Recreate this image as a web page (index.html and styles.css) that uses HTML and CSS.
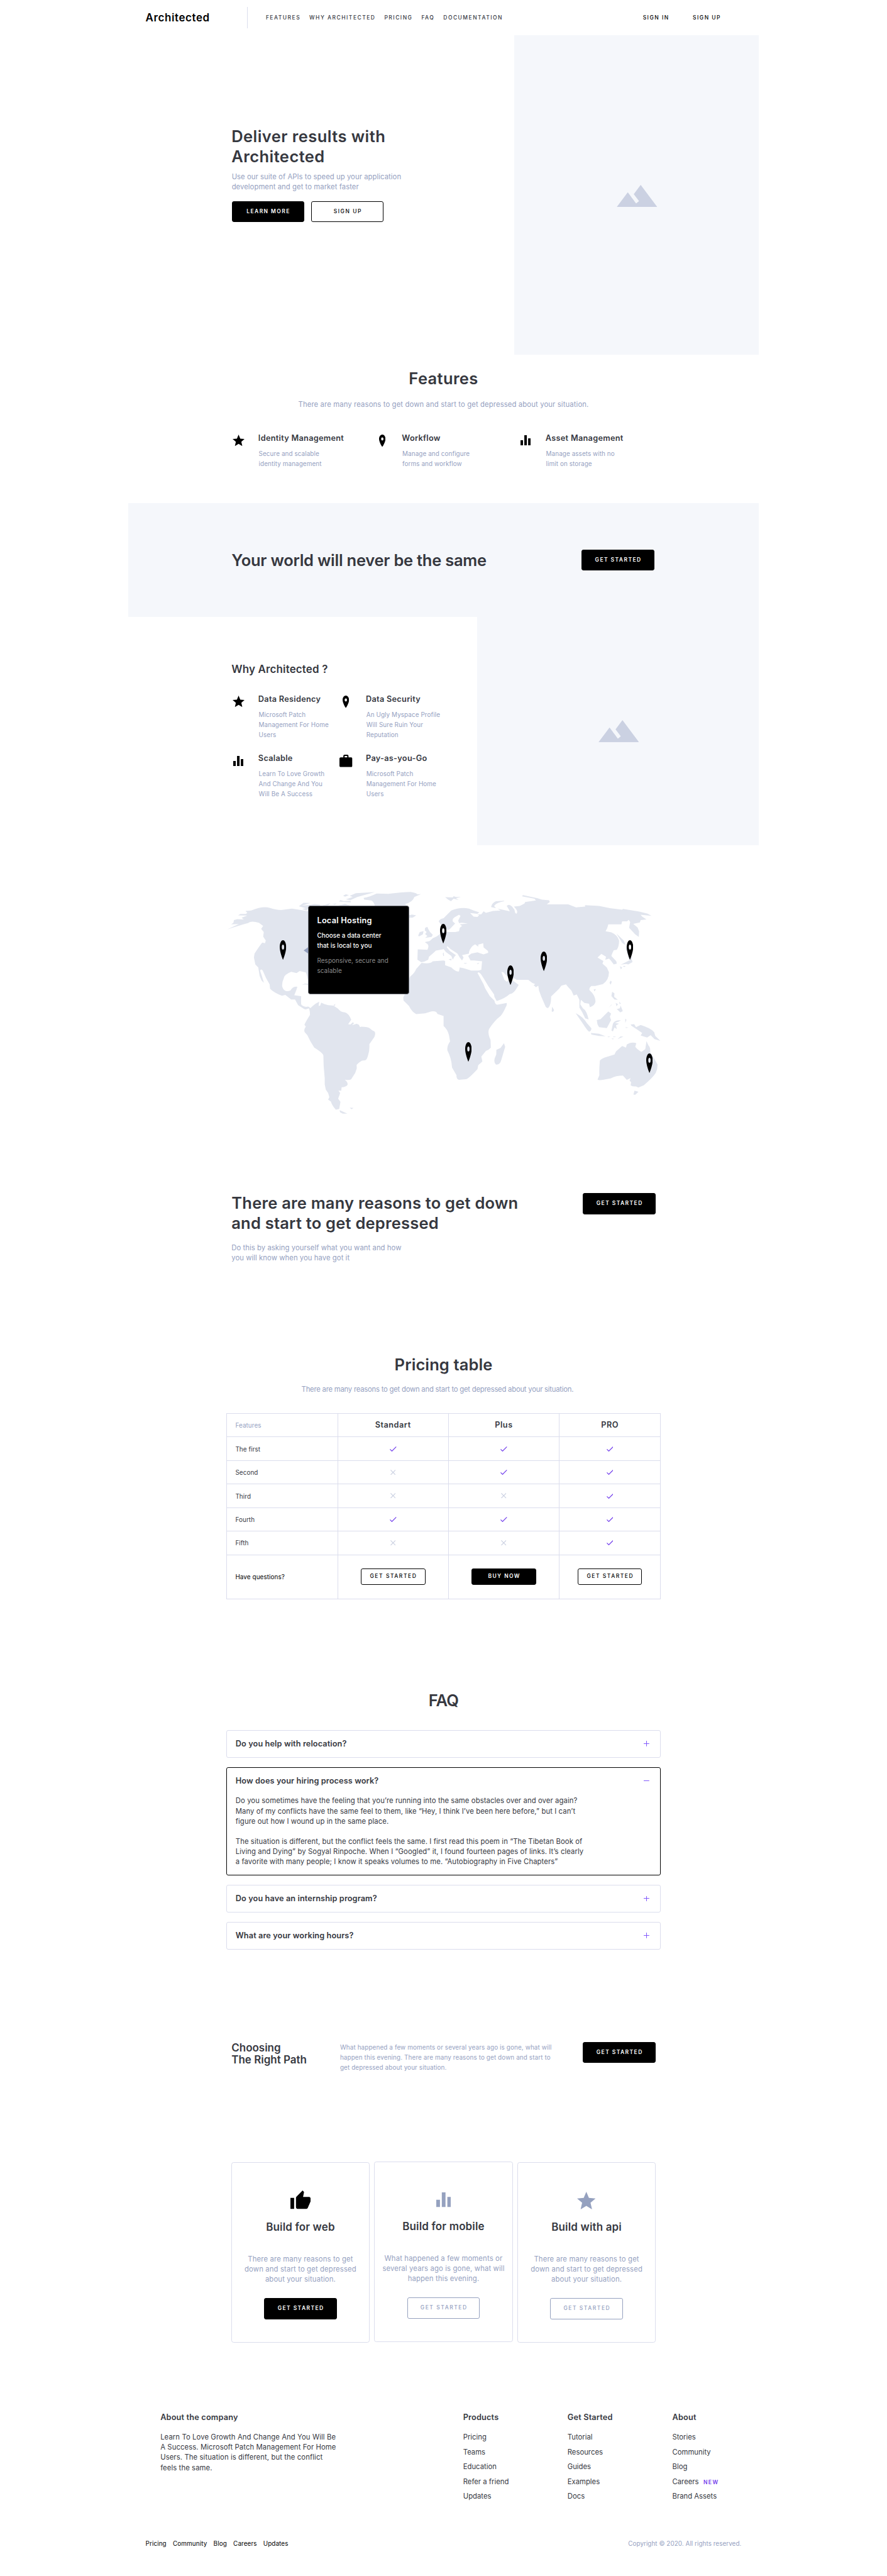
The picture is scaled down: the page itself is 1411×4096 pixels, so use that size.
FILE: index.html
```html
<!DOCTYPE html>
<html lang="en">
<head>
<meta charset="utf-8">
<title>Architected</title>
<link rel="stylesheet" href="styles.css">
</head>
<body>
<svg class="sprite" aria-hidden="true">
  <symbol id="star" viewBox="2 2 20 19" preserveAspectRatio="none"><path d="M12 17.27L18.18 21l-1.64-7.03L22 9.24l-7.19-.61L12 2 9.19 8.63 2 9.24l5.46 4.73L5.82 21z"/></symbol>
  <symbol id="pin" viewBox="5 2 14 20" preserveAspectRatio="none"><path d="M12 2C8.13 2 5 5.13 5 9c0 5.25 7 13 7 13s7-7.75 7-13c0-3.87-3.13-7-7-7zm0 9.5a2.5 2.5 0 0 1 0-5 2.5 2.5 0 0 1 0 5z"/></symbol>
  <symbol id="bars" viewBox="4 4 16 16" preserveAspectRatio="none"><path d="M10 20h4V4h-4v16zm-6 0h4v-8H4v8zM16 9v11h4V9h-4z"/></symbol>
  <symbol id="work" viewBox="2 2 20 19" preserveAspectRatio="none"><path d="M20 6h-4V4c0-1.11-.89-2-2-2h-4c-1.11 0-2 .89-2 2v2H4c-1.11 0-1.99.89-1.99 2L2 19c0 1.11.89 2 2 2h16c1.11 0 2-.89 2-2V8c0-1.11-.89-2-2-2zm-6 0h-4V4h4v2z"/></symbol>
  <symbol id="thumb" viewBox="1 1 22 20"><path d="M1 21h4V9H1v12zm22-11c0-1.1-.9-2-2-2h-6.31l.95-4.57.03-.32c0-.41-.17-.79-.44-1.06L14.17 1 7.59 7.59C7.22 7.95 7 8.45 7 9v10c0 1.1.9 2 2 2h9c.83 0 1.54-.5 1.84-1.22l3.02-7.05c.09-.23.14-.47.14-.73v-2z"/></symbol>
  <symbol id="peaks" viewBox="1 6 22 12"><path d="M14 6l-3.75 5 2.85 3.8-1.6 1.2C9.81 13.75 7 10 7 10l-6 8h22L14 6z"/></symbol>
  <symbol id="check" viewBox="3.4 5.6 17.6 13.4"><path d="M9 16.17L4.83 12l-1.42 1.41L9 19 21 7l-1.41-1.41z"/></symbol>
  <symbol id="cross" viewBox="5 5 14 14"><path d="M19 6.41L17.59 5 12 10.59 6.41 5 5 6.41 10.59 12 5 17.59 6.41 19 12 13.41 17.59 19 19 17.59 13.41 12z"/></symbol>
</svg>

<div class="page">
  <header class="header">
    <div class="logo">Architected</div>
    <nav class="nav"><a>FEATURES</a><a>WHY ARCHITECTED</a><a>PRICING</a><a>FAQ</a><a>DOCUMENTATION</a></nav>
    <nav class="account"><a>SIGN IN</a><a>SIGN UP</a></nav>
  </header>

  <section class="hero">
    <div class="hero-copy">
      <h1 class="title title-hero">Deliver results with<br>Architected</h1>
      <p class="lead">Use our suite of APIs to speed up your application<br>development and get to market faster</p>
      <div class="actions"><a class="btn btn-dark">LEARN MORE</a><a class="btn btn-line">SIGN UP</a></div>
    </div>
    <div class="placeholder placeholder-hero"><svg class="i-peaks"><use href="#peaks"/></svg></div>
  </section>

  <section class="features">
    <h2 class="title title-features">Features</h2>
    <p class="features-sub">There are many reasons to get down and start to get depressed about your situation.</p>
    <div class="feature-grid">
      <div class="item"><span class="item-icon"><svg class="i-star"><use href="#star"/></svg></span><div><h3>Identity Management</h3><p>Secure and scalable<br>identity management</p></div></div>
      <div class="item"><span class="item-icon"><svg class="i-pin"><use href="#pin"/></svg></span><div><h3>Workflow</h3><p>Manage and configure<br>forms and workflow</p></div></div>
      <div class="item"><span class="item-icon"><svg class="i-bars"><use href="#bars"/></svg></span><div><h3>Asset Management</h3><p>Manage assets with no<br>limit on storage</p></div></div>
    </div>
  </section>

  <section class="band">
    <h2 class="title title-band">Your world will never be the same</h2>
    <a class="btn btn-dark">GET STARTED</a>
  </section>

  <section class="why">
    <div class="why-copy">
      <h2>Why Architected ?</h2>
      <div class="why-grid">
        <div class="item"><span class="item-icon"><svg class="i-star"><use href="#star"/></svg></span><div><h3>Data Residency</h3><p>Microsoft Patch<br>Management For Home<br>Users</p></div></div>
        <div class="item"><span class="item-icon"><svg class="i-pin"><use href="#pin"/></svg></span><div><h3>Data Security</h3><p>An Ugly Myspace Profile<br>Will Sure Ruin Your<br>Reputation</p></div></div>
        <div class="item"><span class="item-icon"><svg class="i-bars"><use href="#bars"/></svg></span><div><h3>Scalable</h3><p>Learn To Love Growth<br>And Change And You<br>Will Be A Success</p></div></div>
        <div class="item"><span class="item-icon"><svg class="i-work"><use href="#work"/></svg></span><div><h3>Pay-as-you-Go</h3><p>Microsoft Patch<br>Management For Home<br>Users</p></div></div>
      </div>
    </div>
    <div class="placeholder placeholder-why"><svg class="i-peaks"><use href="#peaks"/></svg></div>
  </section>

  <section class="map">
    <svg class="world" viewBox="0 0 2880 1500" aria-hidden="true">
      <!-- North America and the Arctic islands -->
      <path d="M35 273L110 238 60 240 75 230 78 212 100 206 142 208 128 197 165 183 105 182 120 173 155 173 165 165 153 153 190 150Q265 120 310 133 350 147 385 147L455 138 520 148 560 155 640 160 700 300 640 400 570 520 559 600Q550 560 545 552L505 543 485 556 450 548Q405 565 402 590 388 620 392 645 405 685 445 670 462 640 490 645 485 665 470 700L515 706Q513 740 515 760 530 780 560 774L575 784 565 785 545 792 535 790 495 765 475 728 450 728 412 698 390 703Q340 685 313 658L310 630Q285 590 265 540 255 525 248 540L258 570 273 620 258 605 245 575 236 520 217 500 208 455 212 430Q240 385 262 358L280 362 285 345 268 320 272 290 255 270 268 250 240 230Q190 215 170 232 120 245 35 273Z"/>
      <path d="M993 31L880 62 835 83 805 78 850 62 830 55 870 38ZM787 54L805 45 825 50 800 60ZM760 92L770 83 790 90 835 88 838 97ZM500 122L530 100 575 101 520 118 580 112 600 108 640 112 632 124 560 124 558 140 550 150 520 140 545 136ZM650 118L705 103 690 116ZM712 110L745 104 735 112ZM740 122L800 107 845 122Z"/>
      <path d="M920 68Q960 62 1005 40L1080 42Q1180 30 1225 30 1260 35 1270 45L1293 44 1250 62Q1240 95 1190 108L1215 130 995 130Q990 95 970 85L925 80ZM1215 180L1235 177 1262 182 1240 196 1215 198ZM518 634L540 625 570 628 570 634 540 630ZM725 765l12-8-3 12Z"/>
      <!-- South America -->
      <path d="M560 774L575 784 590 770Q605 755 632 742L628 770 638 768 645 748 665 757 690 765 725 768 755 788Q770 810 800 812 825 820 840 860L820 888 835 890 850 876 858 882 845 895 875 885 890 892 897 908 905 904Q950 905 960 915 975 930 992 936 1000 950 990 972L958 1018Q960 1060 950 1088 942 1120 930 1123L910 1125Q885 1140 875 1153L876 1175 866 1205 840 1245Q830 1255 798 1248 820 1265 816 1282 808 1295 778 1298L775 1320 757 1320 768 1335 755 1372 770 1392 762 1438 740 1443Q715 1415 708 1390L690 1378 698 1362 690 1335 675 1313 668 1280 668 1240 661 1160 659 1090Q650 1070 600 1040 575 1005 555 960L538 940Q530 925 545 903L536 892Q540 880 572 828 572 800 565 785ZM765 1447L815 1469 785 1469 767 1460ZM830 1430L855 1432 842 1440Z"/>
      <!-- Europe and Asia -->
      <path d="M1275 312L1285 290 1310 284 1305 305 1280 318ZM1320 262L1335 256 1340 270 1352 290 1370 308 1362 322 1320 328 1335 315 1320 303 1330 290 1318 280Z"/>
      <path d="M1270 470L1272 402 1335 405Q1348 380 1335 368L1318 355 1350 348 1370 330 1395 318 1420 300 1440 285 1475 290 1515 290 1540 285 1545 262 1560 250 1545 240 1597 235 1560 230 1540 232 1535 215 1550 185 1540 178 1510 195Q1495 205 1500 222L1515 235 1495 255 1480 272 1465 278 1450 250 1425 245 1408 220Q1415 205 1440 200L1460 180 1490 150Q1550 125 1605 138L1635 150 1672 162 1660 172 1612 166 1635 190 1660 192 1672 180 1655 176 1685 175 1700 155 1715 165 1760 153 1810 150 1790 138 1870 155 1865 145 1850 120Q1865 105 1885 125L1900 145 1905 165 1912 172Q1925 160 1910 140L1897 125 1935 120 1965 105 1970 95 2040 85 2030 74 1950 58 1955 50 2050 70 2080 80 2125 84 2130 95 2110 110 2170 110 2250 110 2300 130 2360 125 2358 115 2450 120 2520 135 2600 145 2605 140 2700 155 2765 170 2790 185 2720 178 2730 190 2758 208 2720 212 2715 228 2672 237 2700 260 2710 285 2708 322 2685 305 2645 262 2652 225 2642 210 2632 220 2600 220 2595 240 2510 240Q2505 265 2492 285L2530 292Q2570 310 2580 345 2580 385 2565 405L2545 408 2535 430 2530 445 2562 480 2565 495 2545 500 2530 480 2515 462 2490 470 2495 450 2465 432 2440 455 2460 468 2478 478 2472 495 2500 520 2514 550Q2515 600 2475 628L2425 640 2400 640Q2380 655 2390 670 2425 700 2427 740 2425 765 2390 778L2385 755 2355 750 2332 730 2328 760 2345 785Q2370 800 2382 858L2360 850 2340 810 2322 780 2322 730 2305 695 2285 702 2270 670Q2250 650 2235 630L2205 638 2190 658 2138 708Q2140 760 2120 782 2110 785 2103 775L2075 710 2060 670 2055 638 2040 648 2025 635 2035 628 2015 620 1990 600 1915 600 1900 590 1890 605 1928 633 1905 670Q1885 695 1870 692 1840 720 1785 738L1770 710 1768 695 1730 640 1700 590 1682 562 1665 548 1685 535 1690 480 1640 475 1615 475 1605 455 1600 445 1620 430 1660 422 1700 435 1730 425 1728 412 1700 390 1697 362 1665 372 1665 385 1645 370Q1615 385 1605 420L1605 430 1560 440 1570 455 1560 475 1545 455 1530 430 1485 400 1465 382 1460 388 1480 412 1520 440 1510 450 1500 470 1490 445 1455 420 1440 400 1435 402 1390 410 1375 425 1345 450 1340 470 1315 482 1295 486Z"/>
      <path d="M1833 87L1780 90Q1755 100 1748 128L1780 135 1768 120Q1785 98 1833 90ZM1450 63L1500 65 1505 57 1520 62 1552 62 1520 70 1538 82 1505 73 1488 90 1470 80ZM1472 468L1492 462 1490 475ZM1435 430l5-8 3 22-5 2ZM1570 490l25 2-15 4ZM1655 494l18-4-10 8Z"/>
      <path class="sea" d="M1815 548L1830 552 1845 570 1862 582 1880 597 1895 590 1905 600 1890 610 1865 602 1850 612 1835 600 1828 582Z"/>
      <!-- Africa and Madagascar -->
      <path d="M1297 490Q1350 500 1370 480L1440 475 1450 478 1450 505 1490 520Q1520 550 1540 545L1545 520 1570 525 1620 540 1665 540 1685 535 1675 548 1660 555 1700 630 1710 655 1740 705 1770 735Q1775 762 1790 762L1850 750Q1852 765 1845 775 1825 820 1810 835 1770 865 1735 920 1725 950 1745 990L1747 1040Q1735 1055 1715 1062L1685 1098 1692 1130 1665 1155 1660 1180Q1600 1245 1585 1245L1540 1250Q1522 1245 1524 1220L1495 1170Q1490 1105 1465 1060 1460 1030 1482 1000L1475 960Q1465 920 1440 900L1440 835 1400 822Q1395 800 1360 805L1320 818 1262 823Q1235 810 1215 770L1180 735 1178 715 1190 690 1221 580Q1250 560 1262 530ZM1832 1012L1840 1035 1815 1120Q1805 1155 1780 1150 1765 1140 1772 1110L1782 1085 1783 1055 1810 1042Z"/>
      <!-- Islands of Asia -->
      <path d="M2145 775L2158 797 2150 808 2142 805ZM2298 817Q2345 840 2370 880L2400 915Q2400 935 2385 937 2370 925 2345 885ZM2397 945L2450 950 2492 967 2450 965 2400 955ZM2505 968l20 2-15 3ZM2532 980l18 4-14 2ZM2540 968l22 2-16 3ZM2570 985L2608 969 2590 968ZM2435 862L2460 855 2510 805 2528 820 2520 840 2528 862 2510 895 2500 914 2450 908 2440 890ZM2540 885Q2550 862 2592 863L2575 873 2552 880 2580 885 2560 895 2565 920 2550 910 2540 935 2530 930ZM2535 678L2550 688 2548 710 2572 730 2550 728 2530 705ZM2558 750l15 8-10 14ZM2580 742l12 12-8 3ZM2532 758L2512 782 2530 765ZM2565 790L2585 785 2590 768 2604 803 2588 812ZM2525 605L2532 612 2526 632 2518 620ZM2415 663L2430 660 2420 676ZM2620 852L2628 860 2620 880ZM2622 908l20 3-18 2ZM2588 503L2625 485 2662 465 2667 485 2640 500 2625 497 2600 500ZM2585 512L2600 520 2592 533ZM2605 510l18 0-10 8ZM2625 380L2650 400 2662 465 2645 470 2625 400ZM2563 300L2610 345 2622 375 2600 360Z"/>
      <!-- Australia and New Guinea -->
      <path d="M2655 890L2678 888 2690 908 2720 893Q2790 915 2808 940L2815 965 2848 996 2810 985 2785 960 2762 975 2720 962 2730 945 2700 925 2680 912 2660 898ZM2455 1125Q2450 1180 2452 1220L2440 1247Q2450 1255 2480 1248L2525 1240Q2560 1222 2605 1222L2630 1250 2655 1238 2648 1255 2658 1265 2655 1285Q2670 1295 2690 1292L2705 1300 2740 1285Q2800 1235 2818 1205 2830 1180 2830 1150L2810 1115 2782 1070Q2785 1040 2770 1025L2758 998 2750 1050 2725 1068Q2700 1055 2685 1035L2692 1012Q2660 1000 2630 1020L2625 1040 2600 1030 2560 1065 2550 1085 2500 1100Q2465 1110 2455 1125ZM2680 1320L2706 1327 2685 1347 2673 1345Z"/>
    </svg>
    <svg class="map-pin pin-usa"><use href="#pin"/></svg>
    <svg class="map-pin pin-europe"><use href="#pin"/></svg>
    <svg class="map-pin pin-gulf"><use href="#pin"/></svg>
    <svg class="map-pin pin-asia"><use href="#pin"/></svg>
    <svg class="map-pin pin-japan"><use href="#pin"/></svg>
    <svg class="map-pin pin-africa"><use href="#pin"/></svg>
    <svg class="map-pin pin-australia"><use href="#pin"/></svg>
    <svg class="tip-arrow" viewBox="0 0 10 14"><path d="M10 0L0 7l10 7z"/></svg>
    <div class="tip">
      <h3>Local Hosting</h3>
      <p class="tip-main">Choose a data center<br>that is local to you</p>
      <p class="tip-note">Responsive, secure and<br>scalable</p>
    </div>
  </section>

  <section class="cta">
    <div>
      <h2 class="title title-cta">There are many reasons to get down<br>and start to get depressed</h2>
      <p class="lead cta-lead">Do this by asking yourself what you want and how<br>you will know when you have got it</p>
    </div>
    <a class="btn btn-dark">GET STARTED</a>
  </section>

  <section class="pricing">
    <h2 class="title title-pricing">Pricing table</h2>
    <p class="pricing-sub">There are many reasons to get down and start to get depressed about your situation.</p>
    <div class="table">
      <div class="cell cell-muted">Features</div><div class="cell plan">Standart</div><div class="cell plan">Plus</div><div class="cell plan">PRO</div>
      <div class="cell">The first</div><div class="cell mark"><svg class="yes"><use href="#check"/></svg></div><div class="cell mark"><svg class="yes"><use href="#check"/></svg></div><div class="cell mark"><svg class="yes"><use href="#check"/></svg></div>
      <div class="cell">Second</div><div class="cell mark"><svg class="no"><use href="#cross"/></svg></div><div class="cell mark"><svg class="yes"><use href="#check"/></svg></div><div class="cell mark"><svg class="yes"><use href="#check"/></svg></div>
      <div class="cell">Third</div><div class="cell mark"><svg class="no"><use href="#cross"/></svg></div><div class="cell mark"><svg class="no"><use href="#cross"/></svg></div><div class="cell mark"><svg class="yes"><use href="#check"/></svg></div>
      <div class="cell">Fourth</div><div class="cell mark"><svg class="yes"><use href="#check"/></svg></div><div class="cell mark"><svg class="yes"><use href="#check"/></svg></div><div class="cell mark"><svg class="yes"><use href="#check"/></svg></div>
      <div class="cell">Fifth</div><div class="cell mark"><svg class="no"><use href="#cross"/></svg></div><div class="cell mark"><svg class="no"><use href="#cross"/></svg></div><div class="cell mark"><svg class="yes"><use href="#check"/></svg></div>
      <div class="cell cell-ask">Have questions?</div><div class="cell mark"><a class="btn btn-small btn-line">GET STARTED</a></div><div class="cell mark"><a class="btn btn-small btn-dark">BUY NOW</a></div><div class="cell mark"><a class="btn btn-small btn-line">GET STARTED</a></div>
    </div>
  </section>

  <section class="faq">
    <h2 class="title title-faq">FAQ</h2>
    <div class="faq-list">
      <article class="question"><h3>Do you help with relocation?</h3><span class="toggle plus"></span></article>
      <article class="question open"><h3>How does your hiring process work?</h3><span class="toggle"></span>
        <div class="answer">
          <p>Do you sometimes have the feeling that you’re running into the same obstacles over and over again?<br>Many of my conflicts have the same feel to them, like “Hey, I think I’ve been here before,” but I can’t<br>figure out how I wound up in the same place.</p>
          <p>The situation is different, but the conflict feels the same. I first read this poem in “The Tibetan Book of<br>Living and Dying” by Sogyal Rinpoche. When I “Googled” it, I found fourteen pages of links. It’s clearly<br>a favorite with many people; I know it speaks volumes to me. “Autobiography in Five Chapters”</p>
        </div>
      </article>
      <article class="question"><h3>Do you have an internship program?</h3><span class="toggle plus"></span></article>
      <article class="question"><h3>What are your working hours?</h3><span class="toggle plus"></span></article>
    </div>
  </section>

  <section class="path">
    <h2>Choosing<br>The Right Path</h2>
    <p>What happened a few moments or several years ago is gone, what will<br>happen this evening. There are many reasons to get down and start to<br>get depressed about your situation.</p>
    <a class="btn btn-dark">GET STARTED</a>
  </section>

  <section class="cards">
    <article class="card">
      <span class="card-icon"><svg class="c-thumb"><use href="#thumb"/></svg></span>
      <h3>Build for web</h3>
      <p>There are many reasons to get<br>down and start to get depressed<br>about your situation.</p>
      <a class="btn btn-dark">GET STARTED</a>
    </article>
    <article class="card card-raised">
      <span class="card-icon"><svg class="c-bars"><use href="#bars"/></svg></span>
      <h3>Build for mobile</h3>
      <p>What happened a few moments or<br>several years ago is gone, what will<br>happen this evening.</p>
      <a class="btn btn-soft">GET STARTED</a>
    </article>
    <article class="card">
      <span class="card-icon"><svg class="c-star"><use href="#star"/></svg></span>
      <h3>Build with api</h3>
      <p>There are many reasons to get<br>down and start to get depressed<br>about your situation.</p>
      <a class="btn btn-soft">GET STARTED</a>
    </article>
  </section>

  <footer class="footer">
    <div class="footer-main">
      <div class="company"><h4>About the company</h4><p>Learn To Love Growth And Change And You Will Be<br>A Success. Microsoft Patch Management For Home<br>Users. The situation is different, but the conflict<br>feels the same.</p></div>
      <div class="links"><h4>Products</h4><a>Pricing</a><a>Teams</a><a>Education</a><a>Refer a friend</a><a>Updates</a></div>
      <div class="links"><h4>Get Started</h4><a>Tutorial</a><a>Resources</a><a>Guides</a><a>Examples</a><a>Docs</a></div>
      <div class="links"><h4>About</h4><a>Stories</a><a>Community</a><a>Blog</a><a>Careers<span class="new">NEW</span></a><a>Brand Assets</a></div>
    </div>
    <div class="footer-bottom">
      <nav><a>Pricing</a><a>Community</a><a>Blog</a><a>Careers</a><a>Updates</a></nav>
      <span class="copyright">Copyright © 2020. All rights reserved.</span>
    </div>
  </footer>
</div>
</body>
</html>
```
FILE: styles.css
```css
* { box-sizing: border-box; margin: 0; padding: 0; }
html { background: #fff; font-size: .7347px; }
body {
  font-family: Inter, Roboto, sans-serif;
  font-size: 15.4rem;
  line-height: 22rem;
  color: #36383f;
}
h1, h2, h3, h4 { font-weight: 600; }
svg { display: block; }
.sprite { display: none; }
.page { width: 1366rem; height: 5574rem; margin: 0 auto; overflow: hidden; }

.title { font-size: 34.7rem; line-height: 43rem; }
.title-hero { letter-spacing: .6rem; padding-left: 1rem; }
.title-features { letter-spacing: .5rem; }
.title-band { letter-spacing: -.33rem; }
.title-cta { letter-spacing: .3rem; }
.title-pricing { letter-spacing: .15rem; }
.title-faq { letter-spacing: -1rem; }
.lead { color: #95a1bf; letter-spacing: .07rem; }

.btn {
  display: inline-flex; align-items: center; justify-content: center;
  width: 157rem; height: 46rem; border: 1px solid #000; border-radius: 4rem;
  font-size: 11.56rem; line-height: 16rem; font-weight: 500; letter-spacing: 2.1rem; padding-left: 2rem;
}
.btn-dark { background: #000; color: #fff; font-weight: 600; letter-spacing: 1.95rem; }
.btn-line { color: #000; }
.btn-soft { color: #95a1bf; border-color: #95a1bf; }
.btn-small { width: 140rem; height: 36rem; }

/* Header */
.header { display: flex; align-items: center; height: 76rem; padding: 0 82rem 0 38rem; }
.logo { width: 219rem; font-size: 23.1rem; font-weight: 600; letter-spacing: .8rem; color: #000; }
.nav { display: flex; align-items: center; gap: 19rem; height: 46rem; padding-left: 40rem; border-left: 1px solid #dbdded; }
.nav, .account { font-size: 11.56rem; font-weight: 500; letter-spacing: 2.03rem; }
.account { display: flex; gap: 51rem; margin-left: auto; color: #000; }

/* Hero */
.hero { display: flex; justify-content: space-between; height: 691rem; }
.hero-copy { padding: 198rem 0 0 223rem; }
.hero-copy .lead { margin-top: 11rem; padding-left: 1.5rem; }
.actions { display: flex; gap: 15rem; margin: 20rem 0 0 1.5rem; }
.placeholder { display: flex; align-items: center; justify-content: center; background: #f5f7fb; color: #cbd1e2; }
.placeholder-hero { width: 530rem; padding: 4rem 0 0 2rem; }
.placeholder-why { width: 610rem; padding: 2rem 0 0 2rem; }
.i-peaks { width: 88rem; height: 48rem; fill: currentColor; }

/* Features */
.features { height: 322rem; padding-top: 31rem; text-align: center; }
.features-sub { margin-top: 24rem; color: #95a1bf; letter-spacing: .16rem; }
.feature-grid { display: grid; grid-template-columns: repeat(3, 311rem); margin: 50rem 0 0 223rem; text-align: left; }
.item { display: flex; }
.item-icon { display: flex; align-items: center; justify-content: center; width: 32rem; height: 33rem; margin-right: 27rem; }
.item h3 { font-size: 17.3rem; line-height: 24rem; letter-spacing: .4rem; }
.item p { margin-top: 9rem; font-size: 13.5rem; color: #95a1bf; letter-spacing: .1rem; padding-left: 1rem; }
.i-star { width: 26rem; height: 25rem; }
.i-pin { width: 14rem; height: 27rem; }
.i-bars { width: 22rem; height: 22rem; }
.i-work { width: 28rem; height: 27rem; }

/* Call-out band */
.band { display: flex; align-items: center; justify-content: space-between; height: 246rem; padding: 0 227rem 0 224rem; background: #f5f7fb; }

/* Why Architected */
.why { display: flex; justify-content: space-between; height: 494rem; }
.why-copy { padding: 98.5rem 0 0 223rem; }
.why-copy h2 { font-size: 23.1rem; line-height: 30rem; letter-spacing: .2rem; padding-left: 1rem; }
.why-grid { display: grid; grid-template-columns: 233rem 233rem; row-gap: 29rem; margin-top: 38.5rem; }

/* World map */
.map { position: relative; width: 960rem; height: 500rem; margin: 91rem 0 0 203rem; }
.world { width: 960rem; height: 500rem; fill: #e1e5ee; }
.world .sea { fill: #fff; }
.map-pin { position: absolute; width: 14rem; height: 42.5rem; }
.pin-usa { left: 126rem; top: 115rem; }
.pin-europe { left: 473rem; top: 79rem; }
.pin-gulf { left: 618rem; top: 170rem; }
.pin-asia { left: 690.5rem; top: 139rem; }
.pin-japan { left: 876.5rem; top: 115rem; }
.pin-africa { left: 527rem; top: 336rem; }
.pin-australia { left: 918.5rem; top: 360rem; }
.tip-arrow { position: absolute; left: 176.5rem; top: 130rem; width: 10rem; height: 14rem; fill: #95a1bf; }
.tip { position: absolute; left: 186.5rem; top: 40rem; width: 220rem; height: 192.5rem; padding: 19rem 18.5rem; background: #000; border: 1px solid #6d7078; border-radius: 5rem; color: #fff; }
.tip h3 { font-size: 17.3rem; line-height: 24rem; letter-spacing: .35rem; }
.tip p { font-size: 13.5rem; }
.tip-main { margin-top: 9rem; font-weight: 500; letter-spacing: .08rem; }
.tip-note { margin-top: 10rem; color: #8b8b8b; letter-spacing: .11rem; }

/* Reasons */
.cta { display: flex; justify-content: space-between; margin-top: 162rem; padding: 0 224rem 0 224rem; }
.cta-lead { margin-top: 21rem; }

/* Pricing */
.pricing { margin-top: 198.5rem; text-align: center; }
.pricing-sub { margin-top: 21rem; padding-right: 26rem; color: #95a1bf; letter-spacing: -.32rem; }
.table {
  display: grid; grid-template-columns: 240rem 240rem 240rem 219rem; grid-template-rows: 51rem repeat(5, 51rem) 95rem;
  width: 940rem; margin: 41rem 0 0 213rem; border: 1px solid #dbdded; border-width: 1px 0 0 1px; font-size: 13.5rem; text-align: left;
}
.cell { display: flex; align-items: center; padding-left: 18rem; border: 1px solid #dbdded; border-width: 0 1px 1px 0; letter-spacing: .1rem; }
.cell-muted { color: #95a1bf; }
.cell-ask { color: #000; }
.plan, .mark { justify-content: center; padding: 0; }
.plan { font-size: 17.3rem; font-weight: 600; letter-spacing: .7rem; }
.yes { width: 14.7rem; height: 11.2rem; fill: #7340ec; }
.no { width: 11.6rem; height: 11.6rem; fill: #cbd1e2; }

/* FAQ */
.faq { margin-top: 198.5rem; text-align: center; }
.faq-list { display: grid; gap: 20rem; width: 940rem; margin: 42rem 0 0 213rem; text-align: left; }
.question { display: grid; grid-template-columns: 1fr 12rem; align-items: center; height: 60rem; padding: 0 23rem 0 18.5rem; border: 1px solid #dbdded; border-radius: 4rem; }
.question h3 { font-size: 17.3rem; line-height: 24rem; letter-spacing: .15rem; }
.open { height: 235rem; grid-template-rows: 58rem 1fr; align-items: start; border-color: #000; }
.open h3, .open .toggle { align-self: center; }
.toggle { display: block; height: 12rem; background: linear-gradient(#8259fb, #8259fb) center / 12rem 2rem no-repeat; }
.plus { background: linear-gradient(#8259fb, #8259fb) center / 12rem 2rem no-repeat, linear-gradient(#8259fb, #8259fb) center / 2rem 12rem no-repeat; }
.answer { grid-column: 1 / -1; padding-top: 3rem; letter-spacing: .12rem; }
.answer p + p { margin-top: 22rem; }

/* The right path */
.path { display: flex; height: 66rem; margin-top: 200rem; padding: 0 224rem 0 224rem; }
.path h2 { width: 235rem; font-size: 23.1rem; line-height: 26rem; letter-spacing: 0; }
.path p { font-size: 13.5rem; color: #95a1bf; letter-spacing: .14rem; }
.path .btn { margin-left: auto; }

/* Product cards */
.cards { display: flex; justify-content: space-between; margin-top: 194.5rem; padding: 0 223.5rem; }
.card { display: flex; flex-direction: column; align-items: center; width: 299.5rem; height: 390rem; padding-top: 56rem; border: 1px solid #dbdded; border-radius: 5rem; text-align: center; }
.card-raised { margin: -1.4rem 0 1.4rem; }
.card-icon { display: flex; align-items: center; justify-content: center; height: 48rem; }
.card h3 { margin-top: 21rem; font-size: 23.1rem; line-height: 28rem; letter-spacing: .22rem; }
.card p { margin-top: 44rem; color: #95a1bf; letter-spacing: .19rem; }
.card .btn { margin-top: 29.5rem; }
.c-thumb { width: 44rem; height: 40rem; }
.c-bars { width: 32rem; height: 32rem; margin-top: 3rem; fill: #95a1bf; }
.c-star { width: 40rem; height: 38rem; margin-top: 3rem; fill: #95a1bf; }

/* Footer */
.footer-main { display: grid; grid-template-columns: 655.5rem 226rem 227rem auto; margin: 150rem 0 0 70rem; }
.footer h4 { margin-bottom: 20rem; font-size: 17.3rem; line-height: 24rem; letter-spacing: .25rem; }
.company { letter-spacing: .13rem; }
.links { display: flex; flex-direction: column; }
.links a + a { margin-top: 10rem; }
.new { margin-left: 10rem; font-size: 11.56rem; line-height: 1; font-weight: 600; letter-spacing: 2rem; color: #7340ec; }
.footer-bottom { display: flex; justify-content: space-between; margin-top: 80.5rem; padding: 0 38rem 0 38rem; font-size: 13.5rem; }
.footer-bottom nav { display: flex; gap: 14rem; color: #000; letter-spacing: .1rem; }
.copyright { color: #95a1bf; letter-spacing: .05rem; }
```
